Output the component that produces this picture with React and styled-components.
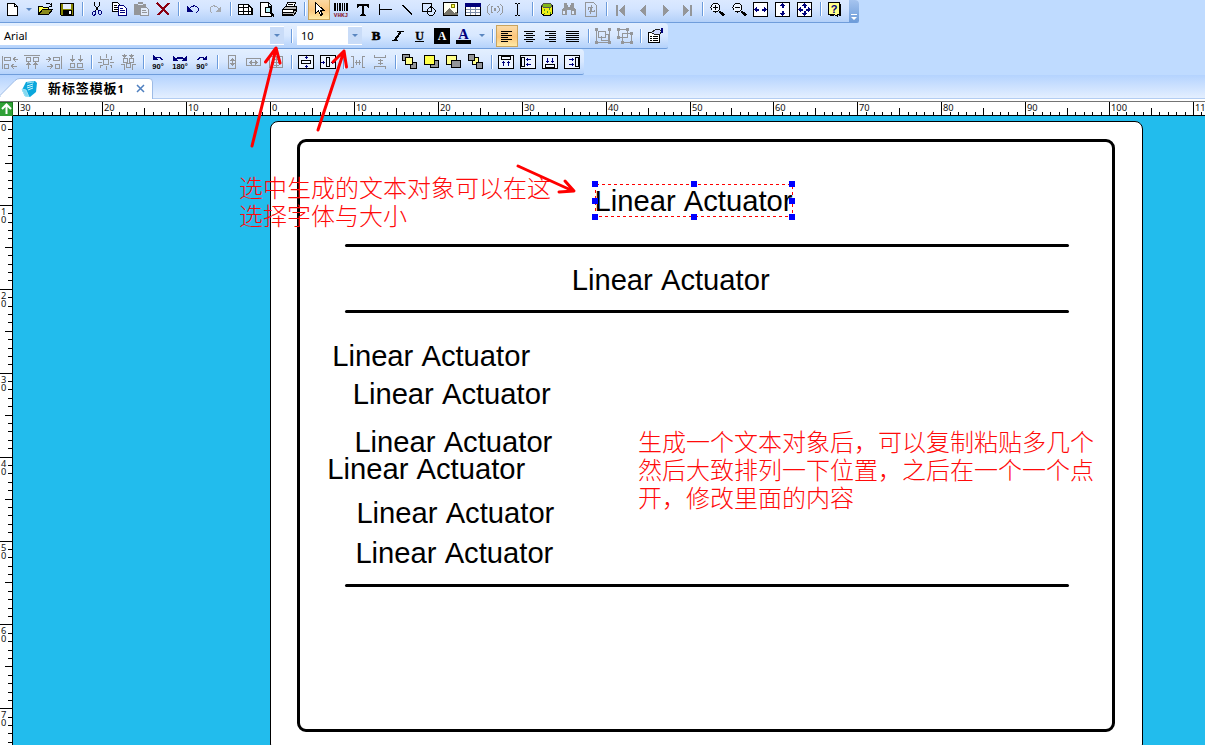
import React from "react";
import styled, { createGlobalStyle } from "styled-components";

const GlobalStyle = createGlobalStyle`
  * { box-sizing: border-box; }
  html, body { margin: 0; padding: 0; overflow: hidden; }
  body { font-family: "Noto Sans", "Liberation Sans", "Noto Sans CJK SC", sans-serif; font-size: 11px; color: #000; }
`;

const Window = styled.div`
  width: 1205px;
  height: 745px;
  display: flex;
  flex-direction: column;
  overflow: hidden;
  position: relative;
  background: #fff;
`;

const ToolArea = styled.div`
  display: flex;
  flex-direction: column;
  align-items: flex-start;
  height: 75px;
  flex: none;
  background: #bfdbff;
`;

const Toolbar = styled.div`
  display: flex;
  align-items: center;
  height: ${(p) => p.$h}px;
  width: ${(p) => p.$w}px;
  padding-left: ${(p) => p.$pl || 0}px;
  background: ${(p) =>
    p.$top
      ? "linear-gradient(#dbe9ff, #d3e4ff 40%, #b3d0f9)"
      : "linear-gradient(#e3efff, #d8e8ff 50%, #b4d2fb)"};
  border-bottom: 1px solid #6f9ddb;
  border-radius: 0 4px 2px 0;
  overflow: hidden;
`;

const ToolButton = styled.span`
  flex: none;
  width: 22px;
  height: 22px;
  display: flex;
  align-items: center;
  justify-content: center;
  border: 1px solid ${(p) => (p.$on ? "#c8a35e" : "transparent")};
  background: ${(p) => (p.$on ? "linear-gradient(#fbdba8, #fcc57a 55%, #fee9a5)" : "none")};
  svg { display: block; flex: none; }
`;

const Separator = styled.span`
  flex: none;
  width: ${(p) => p.$w || 8}px;
  height: 14px;
  padding-left: 2px;
  display: flex;
  justify-content: center;
  &::before { content: ""; width: 2px; background: linear-gradient(90deg, #6b9bdc 50%, #fff 50%); }
`;

const DropMark = styled.span`
  flex: none;
  width: ${(p) => p.$w}px;
  display: flex;
  justify-content: center;
  &::before {
    content: "";
    border: 3px solid transparent;
    border-top-color: #5a86c0;
    border-bottom: 0;
  }
`;

const Combo = styled.span`
  flex: none;
  display: flex;
  align-items: stretch;
  width: ${(p) => p.$w}px;
  height: 19px;
  padding: 1px 0 1px 4px;
  background: #fff;
  line-height: 17px;
  font-size: 11px;
`;
const ComboValue = styled.span` flex: 1; `;
const ComboArrow = styled.span`
  width: 14px;
  display: flex;
  align-items: center;
  background: #c9dcf8;
`;

const Overflow = styled.span`
  margin-left: auto;
  width: 10px;
  height: 24px;
  display: flex;
  align-items: flex-end;
  padding: 0 1px 2px 2px;
  background: linear-gradient(#a8c6f0, #6b9ad8);
`;

const TopTools = styled.div`
  display: flex;
  align-items: center;
  height: 22px;
  margin-top: -4px;
`;
const FormatTools = styled.div`
  display: flex;
  align-items: center;
  padding-left: 3px;
`;
const ArrangeTools = styled.div`
  display: flex;
  align-items: center;
  margin-left: -1px;
`;

const TabStrip = styled.div`
  flex: none;
  height: 24px;
  display: flex;
  align-items: flex-end;
  background: linear-gradient(#b4d3fe, #e4efff);
  border-bottom: 1px solid #b3cdf2;
`;
const Tab = styled.div`
  position: relative;
  width: 153px;
  height: 21px;
  margin-bottom: -1px;
  display: flex;
  align-items: center;
`;
const TabShape = styled.svg`
  position: absolute;
  left: 0;
  top: 0;
`;
const TabContent = styled.div`
  position: relative;
  display: flex;
  align-items: center;
  padding-left: 21px;
  svg { flex: none; }
`;
const TabTitle = styled.span`
  width: 78px;
  margin-left: 11px;
  margin-right: 10px;
  padding-bottom: 2px;
  font: bold 13px/18px "Noto Sans CJK SC", sans-serif;
  letter-spacing: 0.9px;
  white-space: nowrap;
  small { font: bold 11px "Noto Sans", sans-serif; letter-spacing: 0; }
`;

const RulerFrame = styled.div`
  flex: none;
  height: 17px;
  padding-top: 2px;
  display: flex;
  background: #fff;
`;
const RulerRow = styled.div`
  display: flex;
  height: 15px;
  border-top: 1px solid #747474;
`;
const RulerSvg = styled.svg`
  display: block;
  flex: none;
  background: #fff;
  text { font: 9.3px "Noto Sans", sans-serif; fill: #111; }
`;
const Body = styled.div`
  flex: 1;
  display: flex;
  min-height: 0;
`;
const Canvas = styled.div`
  position: relative;
  flex: 1;
  overflow: hidden;
  background: #22bced;
`;
const Paper = styled.div`
  position: absolute;
  left: 257px;
  top: 5px;
  width: 873px;
  height: 631px;
  background: #fff;
  border: 1px solid #000;
  border-radius: 8px;
`;
const Frame = styled.div`
  position: absolute;
  left: 26px;
  top: 17px;
  width: 818px;
  height: 593px;
  border: 3px solid #000;
  border-radius: 9px;
`;
const Rule = styled.div`
  position: absolute;
  left: 74px;
  top: ${(p) => p.$y}px;
  width: 724px;
  height: 3px;
  border-radius: 1.5px;
  background: #000;
`;
const Label = styled.div`
  position: absolute;
  left: ${(p) => p.$x}px;
  top: ${(p) => p.$y}px;
  font: 29.2px/34px "Liberation Sans", Arial, sans-serif;
  font-kerning: none;
  white-space: nowrap;
`;
const Selection = styled.svg`
  position: absolute;
  left: 320px;
  top: 58px;
`;
const Note = styled.div`
  position: absolute;
  left: ${(p) => p.$x}px;
  top: ${(p) => p.$y}px;
  color: #ff0a0a;
  font: 300 24px/28px "Noto Sans CJK SC", sans-serif;
  white-space: nowrap;
`;
const Arrows = styled.svg`
  position: absolute;
  left: 0;
  top: 0;
  pointer-events: none;
`;

const K = "#000";
const N = "#00007b";
const G = "#949699";
const Y = "#ffff4a";

const L = ({ d, c = K, f = "none", w = 1 }) => <path d={d} stroke={c} fill={f} strokeWidth={w} />;
const F = ({ d, c = K }) => <path d={d} fill={c} />;

const alignLines = (x1, x2) => (
  <L d={[3.5, 5.5, 7.5, 9.5, 11.5, 13.5].map((y, i) => `M${x1[i]} ${y}H${x2[i]}`).join("")} />
);
const rot = (d, head, label) => (
  <>
    <L c={N} d={d} w={1.4} />
    <F c={N} d={head} />
    <text x="8" y="15" textAnchor="middle" style={{ font: 'bold 7.5px "Liberation Sans", sans-serif' }}>{label}</text>
  </>
);

const icons = {
  newDoc: <><L f="#fff" d="M3.5 2.5h7l3 3v9h-10z" /><L d="M10.5 2.5v3h3" /></>,
  open: <><L d="M8.5 3.5l1-1h3l2 2M14.5 2v3h-3" /><L f={Y} d="M1.5 12.5v-7h4l1 1h5v3" /><L f="#8a8a1c" d="M1.5 13.5l4-5h10l-4 5z" /></>,
  save: <><L f="#868600" d="M1.5 2.5h13v12h-12l-1-1z" /><F c="#e7efff" d="M4 3h8v5H4z" /><F d="M4 9h9v5H4z" /><F c="#fff" d="M10 10h2v3h-2z" /></>,
  cut: <><L d="M5.5 1v3l4 6M10.5 1v3l-4 6" /><L c={N} d="M4.5 10.5h2v2l-1 2h-1l-1-1v-2zM9.5 9.5h2l1 1v2l-1 1h-1l-1-1z" /></>,
  copy: <><L f="#fff" d="M1.5 1.5h5l3 3v6h-8z" /><L d="M3 4.5h3M3 6.5h4M3 8.5h4" /><L c={N} f="#fff" d="M7.5 4.5h5l3 3v7h-8z" /><L c={N} d="M9 7.5h3M9 9.5h5M9 11.5h5" /></>,
  paste: <><F c={G} d="M1 3h4V1h5v2h3v11H1z" /><L c="#dce8fa" d="M5 3.5h5" /><L c={G} f="#e2ecfa" d="M7.5 6.5h6l2 2v6h-8z" /><L c={G} d="M9 9.5h4M9 11.5h5" /></>,
  del: <L c="#8a0012" w={2} d="M2 2l12 12M14 2L3 14" />,
  undo: <><L c={N} d="M4 8c3-4 7-4 9-1v3l-2 2" /><F c={N} d="M2 5v6h6z" /></>,
  redo: <><L c="#a4a8ae" d="M12 8C9 4 5 4 3 7v3l2 2" /><F c="#a4a8ae" d="M14 5v6H8z" /></>,
  grid: <><L f="#fff" d="M1.5 3.5h9.5l4 4v6H1.5zM1 6.5h10M1 10.5h13M6.5 3v10M11.5 4v9" w={1.1} /></>,
  preview: <><L f="#fff" d="M1.5 1.5h8l3 3v11h-11zM9.5 2v3h3" /><circle cx="9" cy="9" r="3" fill="#bdf5fa" stroke={K} /><L w={2} d="M11.5 11.5l3.5 4" /></>,
  print: <><L f="#fff" d="M4.5 6.5L6.5 1.5h8L12.5 6.5z" /><L d="M7 3.5h5M6 5.5h5" /><L f="#bbb" d="M1.5 8.5l3-3h11v5l-3 4h-11z" /><L f="#fff" d="M1.5 8.5h11v3h-11z" /><F d="M2 13h10v2H3zM13 8h2v2h-2z" /></>,
  pointer: <L f="#fff" d="M4.5 1.5v11l3-3 2 5 2-1-2-4h3.5z" />,
  barcode: <><F d="M1 2h2v8H1zM4 2h1v8H4zM6 2h2v8H6zM9 2h1v8H9zM11 2h1v8h-1zM13 2h2v8h-2z" /><text x="8" y="15.5" textAnchor="middle" fill="#8c2030" style={{ font: 'bold 6px "Liberation Mono", monospace' }}>VHKJ</text></>,
  text: <F d="M2 3h12v4h-1l-1-2H9v8l2 1v1H5v-1l2-1V5H4L3 7H2z" />,
  hline: <L d="M2.5 3v11M3 8.5h12" />,
  diag: <L d="M3 4l10 9" w={1.4} />,
  shapes: <><L d="M1.5 2.5h9v8h-9z" /><L f="#d5e6ff" d="M10.5 5.5l4 4-1 3-2 2h-3l-2-2v-4l2-2z" /><L d="M10.5 5v5.500h-4" /></>,
  image: <><L f="#fffff0" d="M.5 1.5h14v13H.5z" /><circle cx="10" cy="5" r="2" fill={Y} stroke="#7c7c00" /><F c="#77756a" d="M1 14v-2l5-5 5 5 2-2 2 3v1z" /></>,
  table: <><L f="#fff" d="M.5 2.5h15v12H.5z" /><F c={N} d="M0 2h16v4H0z" /><L c="#7d8da8" d="M1 8.5h14M1 11.5h14M5.5 6v8M10.5 6v8" /></>,
  wave: <><L c={G} d="M2.5 3l-2 3v5l2 3M5.5 5l-1.500 2v3l1.500 2M13.5 3l2 3v5l-2 3M10.5 5l1.500 2v3l-1.500 2" /><F c={G} d="M7 7h2v3H7z" /></>,
  ibeam: <L d="M6 2.5h1.500l1 1v10l-1 1H6M11 2.5H9.500l-1 1M8.5 13.500l1 1H11" />,
  db: <><L f="#efef18" d="M2.5 4.5v8c2 3 9 3 11 0v-8c-2-3-9-3-11 0z" /><ellipse cx="8" cy="4.5" rx="5" ry="2" fill="#80b61a" stroke="#555" /><L c="#4c9b20" w={1} d="M5.500 8v2M10.500 7v2M8.500 10v2M5.500 12v1M11.500 11v2" /></>,
  find: <><F c={G} d="M3 2h3v2h1v2h2V4h1V2h3v4l2 3v5h-5V9H6v5H1V9l2-3z" /><F c="#dbe9fd" d="M2 10h2v3H2zM11 10h2v3h-2z" /></>,
  refresh: <L c={G} d="M2.5 1.5h8l3 3v11h-11zM5 8.5v-2h4l-1-2M9 6.5l-2 2M11 8.5v2H7l1 2M7 10.5l2-2" />,
  first: <F c={G} d="M3 4h2v11H3zM12 4v11L6 9.500z" />,
  prev: <F c={G} d="M11 4v11L5 9.500z" />,
  next: <F c={G} d="M6 4v11l6-5.500z" />,
  last: <F c={G} d="M11 4h2v11h-2zM4 4v11l6-5.500z" />,
  zoomIn: <><circle cx="6.500" cy="6.500" r="4.5" fill="#eef5ff" stroke={K} /><L d="M4 6.5h5M6.5 4v5" /><L w={2.5} d="M10.500 10.5l4.5 4" /></>,
  zoomOut: <><circle cx="6.500" cy="6.500" r="4.5" fill="#eef5ff" stroke={K} /><L d="M4 6.5h5" /><L w={2.5} d="M10.500 10.5l4.5 4" /></>,
  fitW: <><L f="#fff" d="M.5 1.5h14v14H.5z" /><F c={N} d="M1 8.500l3-3v2h2v2H4v2zM14 8.500l-3-3v2H9v2h2v2z" /></>,
  fitH: <><L f="#fff" d="M.5 1.5h14v14H.5z" /><F c={N} d="M7.500 2l3 3h-2v2h-2V5h-2zM7.500 15l3-3h-2v-2h-2v2h-2z" /></>,
  fitAll: <><L f="#fff" d="M.5 1.5h14v14H.5z" /><F c={N} d="M1 8.5l3-3v2h2v2H4v2zM14 8.5l-3-3v2H9v2h2v2zM7.5 2l3 3h-2v2h-2V5h-2zM7.5 15l3-3h-2v-2h-2v2h-2z" /></>,
  help: <><L f="#ffff8a" d="M1.5 1.5h11v12h-2v2l-3-2h-6z" /><L d="M13.5 3v11h-2M3 14.5h4" /><text x="7" y="11.5" textAnchor="middle" fill={N} style={{ font: 'bold 11px "Liberation Sans", sans-serif' }}>?</text></>,
  bold: <text x="8" y="12" textAnchor="middle" style={{ font: 'bold 13px "Liberation Serif", serif' }} stroke="#000" strokeWidth=".6">B</text>,
  italic: <><L w={2} d="M10.500 4L5 12" /><L d="M7 3.5h7M2 12.5h6" /></>,
  underline: <><text x="7.5" y="11.5" textAnchor="middle" style={{ font: 'bold 12px "Liberation Serif", serif' }} stroke="#000" strokeWidth=".3">U</text><L d="M3 13.5h9" /></>,
  invert: <><F d="M0 0h16v16H0z" /><text x="8" y="12" textAnchor="middle" fill="#fff" style={{ font: 'bold 12px "Liberation Serif", serif' }}>A</text></>,
  color: <><text x="7.5" y="11" textAnchor="middle" fill={N} style={{ font: 'bold 14.5px "Liberation Serif", serif' }}>A</text><F d="M0 12h15v4H0z" /></>,
  left: alignLines([2, 2, 2, 2, 2, 2], [13, 9, 13, 9, 13, 9]),
  center: alignLines([3, 5, 3, 5, 3, 5], [14, 12, 14, 12, 14, 12]),
  right: alignLines([2, 6, 2, 6, 2, 6], [13, 13, 13, 13, 13, 13]),
  justify: alignLines([1, 1, 1, 1, 1, 1], [14, 14, 14, 14, 14, 14]),
  group: <><L c={G} d="M3.5 3.5h7v6h-7zM6.5 7.500v5h7v-6h-3M1.500 2v11M2 14h12M14.500 2v11" /><F c={G} d="M0 0h3v3H0zM13 0h3v3h-3zM0 13h3v3H0zM13 13h3v3h-3z" /></>,
  ungroup: <><L c={G} d="M1.5 1.5h9v8h-9zM5.5 5.5h9v9h-9z" /><F c={G} d="M0 0h3v3H0zM9 0h3v3H9zM0 8h3v3H0zM13 4h3v3h-3zM4 13h3v3H4zM13 13h3v3h-3z" /></>,
  props: <><L f="#fff" w={1.4} d="M1.5 4.5h11v10h-11z" /><L d="M3 8.5h2M6 8.5h5M3 10.5h2M6 10.5h5M3 12.5h2M6 12.5h5" /><L f="#ced8ff" c="#222" d="M4.5 4.5l4-3h4l2 2-2 3H8l-2-1z" /><F c={N} d="M14 0h2v5h-2z" /></>,
  alL: <L c={G} d="M.5 2v13M2.5 3.5h6v3h-6zM11 5.5h5M13.500 3l-2 2 2 3M2.5 10.5h4v4h-4zM9 12.5h6M11.500 10l-2 2 2 3" />,
  alT: <L c={G} d="M0 1.5h16M2.5 3.5h4v4h-4zM9.5 3.5h5v4h-5zM4.5 9v6M2.5 11l2-2 2 2M11.5 9v6M9.5 11l2-2 2 2" />,
  alR: <L c={G} d="M15.5 2v13M7.5 3.5h6v3h-6zM0 5.5h5M2.500 3l2 2-2 3M9.5 10.5h4v4h-4zM1 12.5h6M4.500 10l2 2-2 3" />,
  alB: <L c={G} d="M0 15.5h16M2.5 9.5h4v4h-4zM9.5 9.5h5v4h-5zM4.5 1v6M2.5 5l2 2 2-2M12.5 1v6M10.5 5l2 2 2-2" />,
  cenA: <L c={G} d="M5.5 5.5h5v5h-5zM8.500 0v4M8.500 12v4M0 8.5h4M12 8.5h4M2.5 2v3h2M13.5 2v3h-2M2.5 14v-3h2M13.5 14v-3h-2" />,
  cenB: <L c={G} d="M3.5 4.5h4v4h-4zM9.5 4.5h4v4h-4zM6.5 9.5h4v4h-4zM4.5 0v3M11.5 0v3M4.5 11v5M12.500 11v5M1 10.5h4M12 10.5h4M2.500 1l2 2 2-2M9.500 1l2 2 2-2" />,
  r90l: rot("M6 4q5-2 6 2", "M3 1v5h5z", "90°"),
  r180: rot("M3 6l3-2h4l3 2", "M1 1v6h5zM15 1v6h-5z", "180°"),
  r90r: rot("M10 4q-5-2-6 2", "M13 1v5H8z", "90°"),
  sizeH: <L c={G} d="M4.5 1.5h7v13h-7zM8.500 4v8M6 6.500h5M6 9.500h5M7 5.500h3M7 10.500h3" />,
  sizeW: <L c={G} d="M.5 4.5h14v7H.5zM3 8.500h9M5.500 6v5M9.500 6v5M4.500 7v3M10.500 7v3" />,
  sizeA: <L c={G} d="M1.5 2.5h13v11h-13zM3 8.500h10M8.500 3v10M5.500 6v5M11.500 6v5M6 5.500h5M6 11.500h5" />,
  pageV: <><L f="#eef5ff" d="M.5 1.5h15v13H.5z" /><L d="M3.5 6.5h9v3h-9z" /><L c={N} d="M8.500 2v3M7 3.5h3M8.500 14v-3M7 12.5h3" /></>,
  pageH: <><L f="#eef5ff" d="M.5 1.5h15v13H.5z" /><L d="M6.5 3.5h3v9h-3z" /><L c={N} d="M1 8.500h4M3.5 7v3M15 8.500h-4M12.5 7v3" /></>,
  gapH: <L c={G} d="M1 2.5h2.5v11H1M15 2.5h-2.5v11H15M5 8.500h6M6.500 6v5M9.500 6v5" />,
  gapV: <L c={G} d="M2.5 1v2.5h11V1M2.5 15v-2.5h11V15M8.500 5v6M6 6.500h5M6 9.500h5" />,
  front: <><L f={G} d="M.5 .5h7v6h-7zM8.5 8.5h6v6h-6z" /><L f="#ffff8a" d="M3.5 3.5h7v7h-7z" /></>,
  fwd: <><L f={G} d="M6.5 6.5h8v7h-8z" /><L f={Y} d="M.5 1.5h10v9H.5z" /></>,
  backw: <><L f="#ffff8a" d="M.5 1.5h10v9H.5z" /><L f={G} d="M5.5 6.5h9v7h-9z" /></>,
  back: <><L f="#ffff8a" d="M4.5 3.5h6v7h-6z" /><L f={G} d="M.5 .5h6v6h-6zM8.5 8.5h6v6h-6z" /></>,
  inT: <><L f="#eef5ff" d="M.5 1.5h15v13H.5z" /><L d="M3.5 2.5h9v3h-9z" /><L c={N} d="M5.5 7v5M4 8.5h3M10.5 7v5M9 8.5h3" /></>,
  inL: <><L f="#eef5ff" d="M.5 1.5h15v13H.5z" /><L d="M1.5 3.5h3v9h-3z" /><L c={N} d="M6 5.5h5M7.5 4v3M6 10.5h5M7.5 9v3" /></>,
  inB: <><L f="#eef5ff" d="M.5 1.5h15v13H.5z" /><L d="M3.5 10.5h9v3h-9z" /><L c={N} d="M5.5 4v5M4 7.5h3M10.5 4v5M9 7.5h3" /></>,
  inR: <><L f="#eef5ff" d="M.5 1.5h15v13H.5z" /><L d="M11.5 3.5h3v9h-3z" /><L c={N} d="M5 5.5h5M8.5 4v3M5 10.5h5M8.5 9v3" /></>,
};

const Icon = ({ name }) => (
  <svg width="16" height="16" viewBox="0 0 16 16" shapeRendering="crispEdges">{icons[name]}</svg>
);

const Tools = ({ items, active }) =>
  items.split(" ").map((n, i) =>
    n === "|" ? <Separator key={i} /> : n === "v" ? <DropMark key={i} $w={11} /> : (
      <ToolButton key={i} $on={n === active}><Icon name={n} /></ToolButton>
    )
  );

const STEP = 8.39;
const range = (a, b) => Array.from({ length: b - a + 1 }, (_, i) => a + i);

const HRuler = () => (
  <RulerSvg width="1192" height="14" viewBox="13 0 1192 14">
    <g shapeRendering="crispEdges">
      {range(-30, 112).map((i) => (
        <rect key={i} x={Math.round(270 + i * STEP)} y={i % 10 === 0 ? 0 : i % 5 === 0 ? 6 : 10} width="1" height="14" />
      ))}
      <rect x="13" y="13" width="1192" height="1" />
    </g>
    {range(-3, 11).map((n) => (
      <text key={n} x={Math.round(270 + n * 10 * STEP) + 2} y="9">{Math.abs(n * 10)}</text>
    ))}
  </RulerSvg>
);

const VRuler = () => (
  <RulerSvg width="13" height="629" viewBox="0 116 13 629">
    <g shapeRendering="crispEdges">
      {range(0, 74).map((i) => (
        <rect key={i} x={i % 10 === 0 ? 0 : i % 5 === 0 ? 5 : 8} y={Math.round(121 + i * STEP)} width="13" height="1" />
      ))}
      <rect x="12" y="116" width="1" height="629" />
    </g>
    {range(0, 7).map((n) =>
      String(n * 10).split("").map((c, j) => (
        <text key={`${n}-${j}`} x="1" y={Math.round(121 + n * 10 * STEP) + 10 + j * 8}>{c}</text>
      ))
    )}
  </RulerSvg>
);

const labels = [
  [581.5, 68], [558.7, 147], [319.2, 223], [339.7, 261], [341.4, 309], [314.3, 336], [343.4, 380], [342.4, 420],
];

export default function App() {
  return (
    <Window>
      <GlobalStyle />
      <ToolArea>
        <Toolbar $h={23} $w={859} $pl={1} $top>
          <TopTools>
            <Tools
              active="pointer"
              items="newDoc v open save | cut copy paste del | undo redo | grid preview print | pointer barcode text hline diag shapes image table wave ibeam | db find refresh | first prev next last | zoomIn zoomOut fitW fitH fitAll | help"
            />
          </TopTools>
          <Overflow>
            <svg width="7" height="7" viewBox="0 0 7 7"><path d="M0 0h6v1H0zM0 3h6L3 6z" fill="#fff" /></svg>
          </Overflow>
        </Toolbar>
        <Toolbar $h={26} $w={668}>
          <Combo $w={284}>
            <ComboValue>Arial</ComboValue>
            <ComboArrow><DropMark $w={14} /></ComboArrow>
          </Combo>
          <Separator $w={13} />
          <Combo $w={65}>
            <ComboValue>10</ComboValue>
            <ComboArrow><DropMark $w={14} /></ComboArrow>
          </Combo>
          <FormatTools>
            <Tools items="bold italic underline invert color" />
            <DropMark $w={13} />
            <Tools active="left" items="| left center right justify | group ungroup | props" />
          </FormatTools>
        </Toolbar>
        <Toolbar $h={26} $w={584}>
          <ArrangeTools>
            <Tools items="alL alT alR alB | cenA cenB | r90l r180 r90r | sizeH sizeW sizeA | pageV pageH | gapH gapV | front fwd backw back | inT inL inB inR" />
          </ArrangeTools>
        </Toolbar>
      </ToolArea>

      <TabStrip>
        <Tab>
          <TabShape width="153" height="21" viewBox="0 0 153 21">
            <path d="M0 17.5L15 2.5Q17 .5 20 .5H149q3.5 0 3.5 3.5V21H0z" fill="#fff" stroke="#9dbbe6" />
            <rect y="19" width="152" height="2" fill="#fff" />
          </TabShape>
          <TabContent>
            <svg width="16" height="16" viewBox="0 0 16 16">
              <path d="M5 1l9-1 2 2-1 9-6 5-5-1-3-6z" fill="#0aa7dc" />
              <path d="M1 8l3 7 4 1-3-7zM6 2l7-1" fill="#81d8f0" stroke="#9be2f6" />
              <path d="M6 5l6-2M6 7l6-2M7 9l5-2" stroke="#c6f2fc" />
            </svg>
            <TabTitle>新标签模板<small>1</small></TabTitle>
            <svg width="9" height="9" viewBox="0 0 9 9"><path d="M1 1l7 7M8 1L1 8" stroke="#4e7fbf" strokeWidth="1.5" /></svg>
          </TabContent>
        </Tab>
      </TabStrip>

      <RulerFrame>
        <RulerRow>
          <svg width="13" height="14" viewBox="0 0 13 14">
            <rect width="13" height="14" fill="#30a136" />
            <path d="M0 0h13v1H0zM12 0h1v14h-1z" fill="#177d1d" />
            <path d="M6.5 12V3M2 7l4.5-4.5L11 7" fill="none" stroke="#fff" strokeWidth="2" />
          </svg>
          <HRuler />
        </RulerRow>
      </RulerFrame>

      <Body>
        <VRuler />
        <Canvas>
          <Paper>
            <Frame />
            <Rule $y={122} />
            <Rule $y={188} />
            <Rule $y={462} />
          </Paper>
          {labels.map(([x, y]) => <Label key={y} $x={x} $y={y}>Linear Actuator</Label>)}
          <Selection width="480" height="60" viewBox="333 174 480 60" shapeRendering="crispEdges">
            <rect x="595.5" y="184.5" width="197" height="32" fill="none" stroke="#f00" strokeDasharray="3 3" />
            {[592, 691, 789].flatMap((x) => [181, 198, 214].map((y) =>
              x === 691 && y === 198 ? null : <rect key={`${x}-${y}`} x={x} y={y} width="6" height="6" fill="#00f" />
            ))}
          </Selection>
          <Note $x={226} $y={57}>选中生成的文本对象可以在这<br />选择字体与大小</Note>
          <Note $x={625} $y={311}>生成一个文本对象后，可以复制粘贴多几个<br />然后大致排列一下位置，之后在一个一个点<br />开，修改里面的内容</Note>
        </Canvas>
      </Body>

      <Arrows width="1205" height="745" viewBox="0 0 1205 745" fill="none" stroke="#f00" strokeWidth="3" strokeLinecap="round" strokeLinejoin="round">
        <path d="M252 146L276 49M265.5 62L276 48L280 63" />
        <path d="M318 130L344 51M333 62L344 51L346.500 67" />
        <path d="M518 166L573 191M565 181L574 191L559 192" />
      </Arrows>
    </Window>
  );
}
